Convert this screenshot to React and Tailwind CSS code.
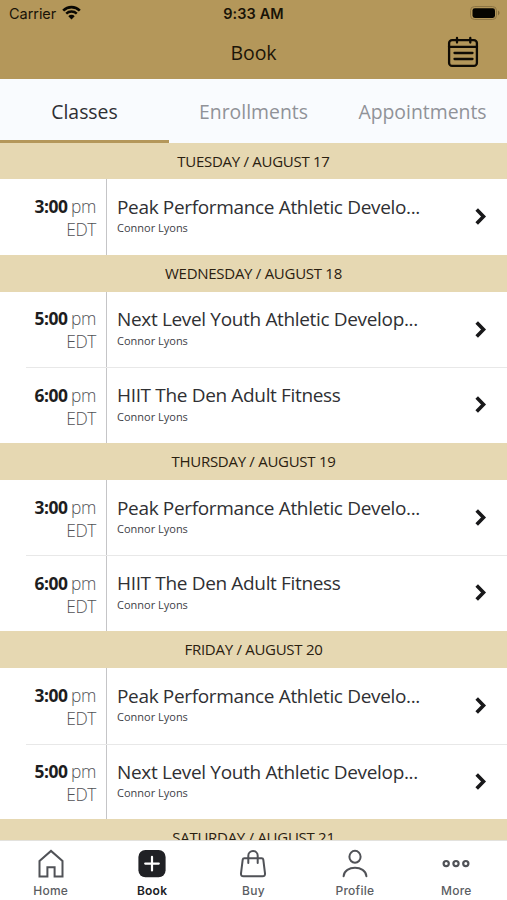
const schedule = [
  {
    date: 'TUESDAY / AUGUST 17',
    classes: [{ time: '3:00', name: 'Peak Performance Athletic Develo...' }],
  },
  {
    date: 'WEDNESDAY / AUGUST 18',
    classes: [
      { time: '5:00', name: 'Next Level Youth Athletic Develop...' },
      { time: '6:00', name: 'HIIT The Den Adult Fitness' },
    ],
  },
  {
    date: 'THURSDAY / AUGUST 19',
    classes: [
      { time: '3:00', name: 'Peak Performance Athletic Develo...' },
      { time: '6:00', name: 'HIIT The Den Adult Fitness' },
    ],
  },
  {
    date: 'FRIDAY / AUGUST 20',
    classes: [
      { time: '3:00', name: 'Peak Performance Athletic Develo...' },
      { time: '5:00', name: 'Next Level Youth Athletic Develop...' },
    ],
  },
  { date: 'SATURDAY / AUGUST 21', classes: [] },
];

function StatusBar() {
  return (
    <div className="h-[27px] grid grid-cols-3 items-center pl-[9px] pr-[7px] font-['Inter',sans-serif] text-[#191307]">
      <div className="flex items-center gap-[6px] text-[14.5px] tracking-[-0.05px]">
        Carrier
        <svg className="-mt-[2px]" width="19" height="15" viewBox="0 0 19 15" fill="none">
          <path d="M1.2 5.6a11.8 11.8 0 0 1 16.6 0" stroke="#0a0803" strokeWidth="2.7" />
          <path d="M4.2 8.7a7.6 7.6 0 0 1 10.6 0" stroke="#0a0803" strokeWidth="2.4" />
          <path d="M6.3 11.2a4.5 4.5 0 0 1 6.4 0L9.5 14.4z" fill="#0a0803" />
        </svg>
      </div>
      <div className="-ml-[2px] text-center text-[14.5px] font-semibold tracking-[0.1px]">9:33 AM</div>
      <div className="flex justify-end">
        <svg className="-mt-px" width="30" height="14" viewBox="0 0 30 14">
          <rect x="0.5" y="0.5" width="26" height="13" rx="4" fill="none" stroke="#8d7544" />
          <rect x="2.5" y="2.3" width="22.5" height="9.6" rx="2.3" fill="#050401" />
          <path d="M28 4.6v4.8c2-.9 2-3.9 0-4.8z" fill="#80693a" />
        </svg>
      </div>
    </div>
  );
}

function Header() {
  return (
    <div className="flex-1 grid grid-cols-3 items-center">
      <div />
      <h1 className="text-center text-[19.5px] leading-[26px] -mt-px tracking-[-0.1px] text-[#1c1508]">Book</h1>
      <svg className="justify-self-end mr-[28px] -mt-[2px]" width="32" height="32" viewBox="0 0 32 32" fill="none" stroke="#0f0b04" strokeWidth="2.3" strokeLinecap="round">
        <rect x="2.1" y="4.1" width="27.8" height="25.8" rx="3" />
        <path d="M2 10.8h28M10 2v4.5M23.3 2v4.5M7.5 17h18M7.5 23h18" />
      </svg>
    </div>
  );
}

function Tabs() {
  return (
    <div className="h-[63.3px] grid grid-cols-3 bg-[#f9fbfe] text-center text-[19.4px] leading-[65px] text-[#909298]">
      <div className="h-[63.3px] border-b-[3px] border-[#b4975a] text-[#2e2f33]">Classes</div>
      <div>Enrollments</div>
      <div>Appointments</div>
    </div>
  );
}

function ClassRow({ item, divided }) {
  return (
    <div className="flex h-[75.75px]">
      <div className="w-[26px]" />
      <div className={`flex flex-1 ${divided ? 'border-t border-[#e8e8e8]' : ''}`}>
        <div className={`w-[81px] border-r-[1.5px] border-[#c5c5c7] pr-[10px] text-right text-[17.4px] leading-[23px] tracking-[-0.4px] font-light text-[#515256] ${divided ? 'pt-[15.2px]' : 'pt-[15.8px]'}`}>
          <div className="flex justify-end gap-[3.5px]">
            <span className="font-bold text-[#1d1d20]">{item.time}</span>
            <span>pm</span>
          </div>
          <div>EDT</div>
        </div>
        <div className={`flex-1 pl-[10px] whitespace-nowrap text-[#2f3033] ${divided ? 'pt-[15px]' : 'pt-[15.8px]'}`}>
          <div className="text-[19px] leading-[25px] tracking-[-0.34px]">{item.name}</div>
          <div className="mt-[0.4px] text-[11px] leading-[15px] text-[#404146]">Connor Lyons</div>
        </div>
        <svg className={`mr-[20px] ${divided ? 'mt-[28px]' : 'mt-[29px]'}`} width="12" height="17" viewBox="0 0 12 17" fill="none" stroke="#18181a" strokeWidth="3.6">
          <path d="M1.7 1.6 8.5 8.5 1.7 15.4" />
        </svg>
      </div>
    </div>
  );
}

function DaySection({ day }) {
  return (
    <section>
      <h2 className="h-[36.6px] bg-[#e6d8b2] text-center text-[15px] leading-[36.4px] tracking-[-0.28px] text-[#2a2010]">{day.date}</h2>
      {day.classes.map((item, i) => (
        <ClassRow key={i} item={item} divided={i > 0} />
      ))}
    </section>
  );
}

const iconProps = { width: 30, height: 30, viewBox: '0 0 30 30', fill: 'none', stroke: '#505257', strokeWidth: 2 };

const navItems = [
  {
    label: 'Home',
    icon: (
      <svg {...iconProps}>
        <path d="M3.5 12 15 1.9 26.5 12v15.4h-7.9v-9.2h-7.2v9.2H3.5z" />
      </svg>
    ),
  },
  {
    label: 'Book',
    active: true,
    icon: (
      <svg {...iconProps}>
        <rect x="1.4" y="1" width="27.2" height="27.2" rx="7" fill="#202125" stroke="none" />
        <path d="M15 7.8v13.6M8.2 14.6h13.6" stroke="#fff" strokeWidth="2.2" strokeLinecap="round" />
      </svg>
    ),
  },
  {
    label: 'Buy',
    icon: (
      <svg {...iconProps} strokeLinecap="round">
        <path d="M6.3 9.3h17.4q1.4 0 1.6 1.4l1.7 13.6q.3 3-2.5 3H5.5q-2.8 0-2.5-3l1.7-13.6q.2-1.4 1.6-1.4z" />
        <path d="M10.3 14V6.7a4.7 4.7 0 0 1 9.4 0V14" />
      </svg>
    ),
  },
  {
    label: 'Profile',
    icon: (
      <svg {...iconProps} strokeLinecap="round">
        <ellipse cx="15" cy="7.8" rx="5.6" ry="6" />
        <path d="M3.6 27.2C4.4 15.9 25.6 15.9 26.4 27.2" />
      </svg>
    ),
  },
  {
    label: 'More',
    icon: (
      <svg {...iconProps} strokeWidth="2.2">
        <circle cx="5.2" cy="14.6" r="2.6" />
        <circle cx="15" cy="14.6" r="2.6" />
        <circle cx="24.8" cy="14.6" r="2.6" />
      </svg>
    ),
  },
];

function BottomNav() {
  return (
    <nav className="h-[60px] shrink-0 grid grid-cols-5 border-t border-[#e3e2de] bg-white pt-[8px] font-['Inter',sans-serif] text-[12px]">
      {navItems.map((item) => (
        <div key={item.label} className={`flex flex-col items-center gap-[3px] leading-[18px] tracking-[0.25px] ${item.active ? 'font-semibold text-[#202125]' : 'font-medium text-[#5b5d62]'}`}>
          {item.icon}
          {item.label}
        </div>
      ))}
    </nav>
  );
}

export default function App() {
  return (
    <div className="w-[507px] h-[900px] flex flex-col overflow-hidden bg-white font-['Open_Sans',sans-serif]">
      <header className="h-[79.4px] shrink-0 flex flex-col bg-[#b4975a]">
        <StatusBar />
        <Header />
      </header>
      <main className="flex-1 min-h-0 overflow-hidden">
        <Tabs />
        {schedule.map((day) => (
          <DaySection key={day.date} day={day} />
        ))}
      </main>
      <BottomNav />
    </div>
  );
}
